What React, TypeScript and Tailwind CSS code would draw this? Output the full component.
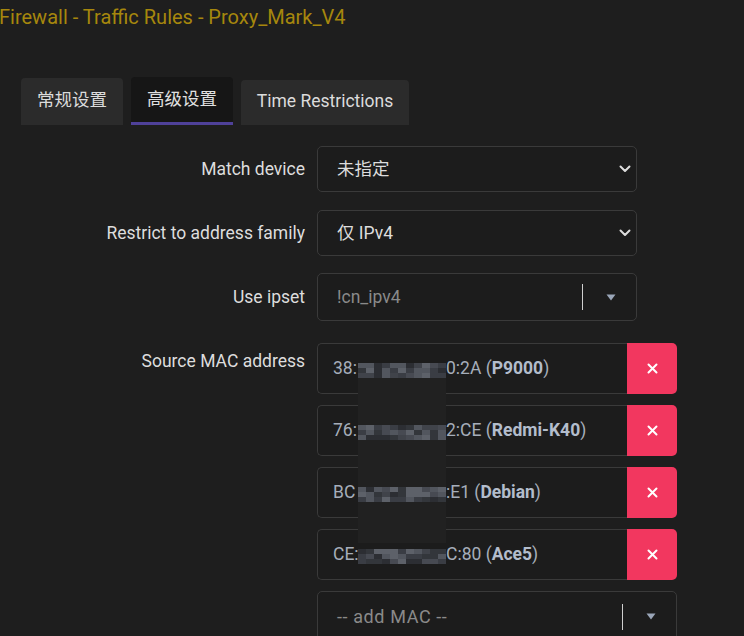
import React from "react";

const FONT = { fontFamily: 'Roboto, "Noto Sans CJK SC", sans-serif' };

function Chevron() {
  return (
    <svg width="12" height="8" viewBox="0 0 12 8" className="shrink-0">
      <path d="M1.5 1.5 L6 6 L10.5 1.5" fill="none" stroke="#dddddd" strokeWidth="2" strokeLinecap="round" strokeLinejoin="round" />
    </svg>
  );
}

function Tri() {
  return (
    <svg width="10" height="7" viewBox="0 0 10 7">
      <path d="M0.5 0.5 L9.5 0.5 L5 6.5 Z" fill="#9aa6b8" />
    </svg>
  );
}

function XIcon() {
  return (
    <svg width="11" height="11" viewBox="0 0 11 11">
      <path d="M1.5 1.5 L9.5 9.5 M9.5 1.5 L1.5 9.5" stroke="#ffffff" strokeWidth="2" strokeLinecap="round" />
    </svg>
  );
}

function Mosaic({ seed }: { seed: number }) {
  const cols = 11;
  const rows = 3;
  const shades = ["#2c2e33", "#3a3d44", "#474a52", "#52565e", "#5d6169", "#33363b", "#40434a"];
  const cells = [];
  let s = seed;
  for (let r = 0; r < rows; r++) {
    for (let c = 0; c < cols; c++) {
      s = (s * 9301 + 49297) % 233280;
      const idx = Math.floor((s / 233280) * shades.length);
      cells.push(<rect key={r + "-" + c} x={c * 8} y={r * 5} width="8" height="5" fill={shades[idx]} />);
    }
  }
  return (
    <svg width="88" height="15" viewBox="0 0 88 15" className="block">
      {cells}
    </svg>
  );
}

function SelectBox({ text }: { text: string }) {
  return (
    <div className="w-[320px] h-[46px] rounded-[5px] border border-[#3a3a3a] bg-[#1c1c1c] flex items-center pl-[19px] pr-[5px] justify-between">
      <span className="text-[17.5px] text-[#dddddd]">{text}</span>
      <Chevron />
    </div>
  );
}

function ComboBox({ text, w, big }: { text: string; w: string; big?: boolean }) {
  return (
    <div className={"h-[48px] rounded-[5px] border border-[#3a3a3a] bg-[#1c1c1c] flex items-center pl-[19px] " + w}>
      <span className={big ? "flex-1 text-[18px] tracking-[0.6px] text-[#8a8a8a]" : "flex-1 text-[17.5px] text-[#8a8a8a]"}>{text}</span>
      <div className="w-[1px] h-[26px] bg-[#cfcfcf]" />
      <div className="w-[53px] flex justify-center pl-[2px]">
        <Tri />
      </div>
    </div>
  );
}

function MacRow({ pre, post, name }: { pre: string; post: string; name: string }) {
  return (
    <div className="flex h-[51px] w-[360px]">
      <div className="flex-1 flex items-center pl-[15px] border border-r-0 border-[#3a3a3a] rounded-l-[5px] bg-[#1c1c1c] text-[17.5px] text-[#a6aeba]">
        <span className="inline-block w-[113px] overflow-hidden whitespace-nowrap">{pre}</span>
        <span>{post} (</span>
        <span className="font-bold text-[#b3bdcc]">{name}</span>
        <span>)</span>
      </div>
      <div className="w-[50px] bg-[#f2375f] rounded-r-[5px] flex items-center justify-center">
        <XIcon />
      </div>
    </div>
  );
}

export default function App() {
  return (
    <div className="relative w-[744px] h-[636px] overflow-hidden bg-[#1e1e1e]" style={FONT}>
      <div className="pt-[4px] ml-[-1px] text-[20px] leading-[26px] text-[#a6870d]">
        Firewall - Traffic Rules - Proxy_Mark_V4
      </div>

      <div className="mt-[47px] flex items-end gap-[8px] pl-[21px] h-[48px]">
        <div className="w-[102px] h-[47px] bg-[#2b2b2b] rounded-t-[4px] flex items-center justify-center text-[17.5px] text-[#dcdcdc] pb-[2px]">
          常规设置
        </div>
        <div className="w-[102px] h-[48px] bg-[#161616] rounded-t-[4px] flex flex-col">
          <div className="flex-1 flex items-center justify-center text-[17.5px] text-[#e0e0e0]">高级设置</div>
          <div className="h-[3px] bg-[#4f4199]" />
        </div>
        <div className="w-[168px] h-[45px] bg-[#2b2b2b] rounded-t-[4px] flex items-center justify-center text-[17.5px] text-[#dcdcdc] pb-[3px]">
          Time Restrictions
        </div>
      </div>

      <div className="mt-[21px] flex flex-col">
        <div className="flex items-center gap-[12px]">
          <div className="w-[305px] text-right text-[17.5px] text-[#dddddd]">Match device</div>
          <SelectBox text="未指定" />
        </div>
        <div className="mt-[18px] flex items-center gap-[12px]">
          <div className="w-[305px] text-right text-[17.5px] text-[#dddddd]">Restrict to address family</div>
          <SelectBox text="仅 IPv4" />
        </div>
        <div className="mt-[17px] flex items-center gap-[12px]">
          <div className="w-[305px] text-right text-[17.5px] text-[#dddddd]">Use ipset</div>
          <ComboBox text="!cn_ipv4" w="w-[320px]" />
        </div>
        <div className="mt-[22px] flex items-start gap-[12px]">
          <div className="w-[305px] text-right text-[17.5px] leading-[24px] mt-[6px] text-[#dddddd]">Source MAC address</div>
          <div className="flex flex-col gap-[11px]">
            <MacRow pre="38:" post="0:2A" name="P9000" />
            <MacRow pre="76:" post="2:CE" name="Redmi-K40" />
            <MacRow pre="BC" post=":E1" name="Debian" />
            <MacRow pre="CE:" post="C:80" name="Ace5" />
            <ComboBox text="-- add MAC --" w="w-[360px] h-[51px]" big />
          </div>
        </div>
      </div>

      <div className="absolute left-[358px] top-[378px] w-[88px] h-[165px] bg-[#212121]" />
      <div className="absolute left-[358px] top-[363px]"><Mosaic seed={7} /></div>
      <div className="absolute left-[358px] top-[425px]"><Mosaic seed={31} /></div>
      <div className="absolute left-[358px] top-[487px]"><Mosaic seed={59} /></div>
      <div className="absolute left-[358px] top-[549px]"><Mosaic seed={97} /></div>
    </div>
  );
}
